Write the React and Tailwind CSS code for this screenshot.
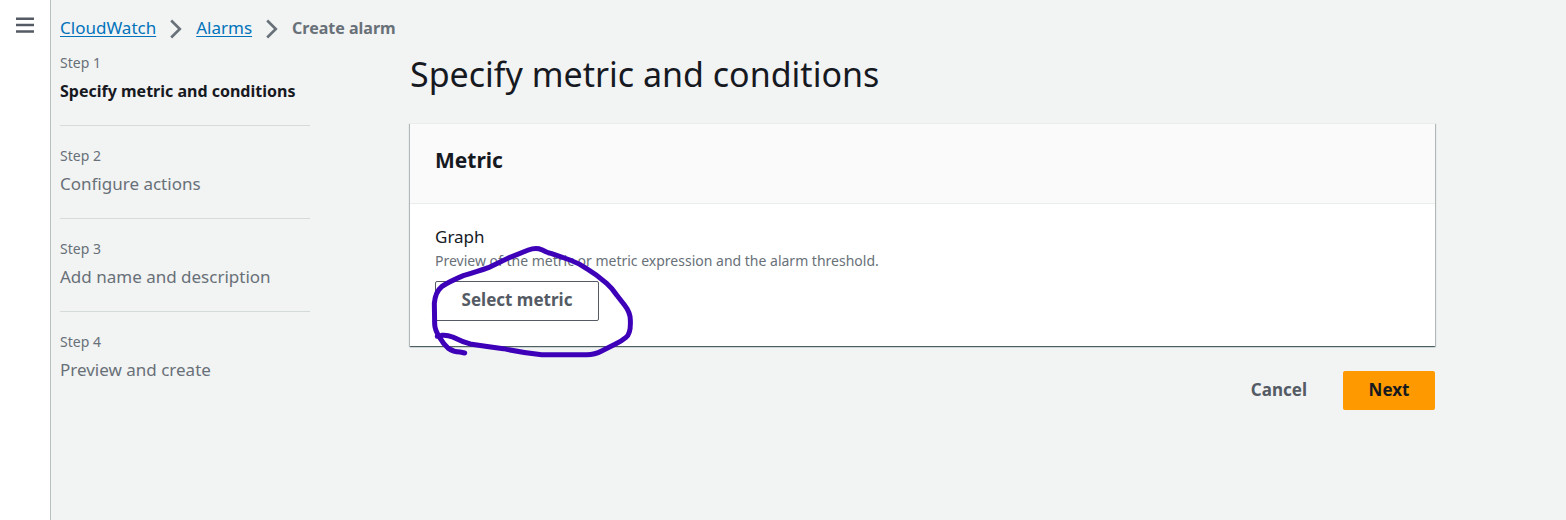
const steps = [
  'Specify metric and conditions',
  'Configure actions',
  'Add name and description',
  'Preview and create',
];

function Chevron() {
  return (
    <svg className="mx-[14px] mt-0.5 h-5 w-3 shrink-0" viewBox="0 0 12 20" fill="none" stroke="#687078" strokeWidth="2.6" aria-hidden="true">
      <path d="M1.2 1.5 L9.8 10 L1.2 18.5" />
    </svg>
  );
}

function Breadcrumbs() {
  return (
    <nav aria-label="Breadcrumbs">
      <ol className="flex items-center text-[17px] leading-6">
        <li><a href="#cloudwatch" className="text-[#0073bb] underline underline-offset-2">CloudWatch</a></li>
        <li className="flex items-center">
          <Chevron />
          <a href="#alarms" className="text-[#0073bb] underline underline-offset-2">Alarms</a>
        </li>
        <li className="flex items-center text-base leading-6 font-bold text-[#687078]" aria-current="page">
          <Chevron />
          Create alarm
        </li>
      </ol>
    </nav>
  );
}

function Steps() {
  return (
    <ol className="w-[250px] shrink-0 divide-y divide-[#d5dbdb]">
      {steps.map((title, i) => (
        <li key={title} className="flex flex-col gap-1 pt-[18px] pb-[22px] leading-6 first:pt-0">
          <span className="text-sm leading-6 text-[#687078]">Step {i + 1}</span>
          <span className={i === 0 ? 'text-base leading-6 font-bold text-[#16191f]' : 'text-[17px] leading-6 text-[#687078]'}>
            {title}
          </span>
        </li>
      ))}
    </ol>
  );
}

function Scribble() {
  return (
    <svg
      className="pointer-events-none absolute -top-[41px] -left-[10px] h-[120px] w-[215px] max-w-none"
      viewBox="75 60 645 360"
      fill="none"
      stroke="#3d00b8"
      strokeWidth="15"
      strokeLinecap="round"
      strokeLinejoin="round"
      aria-hidden="true"
    >
      <path d="M194 399 L180 396 Q160 395 145 385 Q130 372 120 354 Q104 330 104 312 L103 250 Q106 215 125 200 Q145 186 190 167 Q235 154 265 143 L330 112 L385 90 Q408 81 425 89 Q438 97 455 101 L510 120 Q535 129 560 146 Q590 164 620 190 Q635 203 650 225 L674 256 Q691 278 691 300 Q693 340 678 352 Q665 363 645 373 L605 393 Q585 404 560 404 L425 404 Q370 399 310 386 Q260 380 215 373 Q185 365 158 351 Q140 344 125 346 L112 349" />
    </svg>
  );
}

export default function App() {
  return (
    <div className="flex min-h-screen bg-[#f2f3f3] font-['Noto_Sans',sans-serif] text-[#16191f]">
      <aside className="w-[51px] shrink-0 border-r border-[#b8c0c0] bg-white">
        <button type="button" aria-label="Open navigation" className="mt-[17px] ml-4 block text-[#545b64]">
          <svg className="h-4 w-[18px]" viewBox="0 0 18 16" stroke="currentColor" strokeWidth="2.5" aria-hidden="true">
            <path d="M0 1.7h18M0 8h18M0 14.5h18" />
          </svg>
        </button>
      </aside>

      <div className="min-w-0 flex-1 pt-4 pl-[9px]">
        <Breadcrumbs />
        <div className="mt-[11px] flex gap-[100px]">
          <Steps />
          <main className="mr-8 max-w-[1025px] min-w-0 flex-1">
            <h1 className="mt-[2px] text-[34px] leading-[42px]">Specify metric and conditions</h1>

            <section className="mt-7 bg-white shadow-[0_1px_1px_0_rgba(0,28,36,0.5),1px_1px_1px_0_rgba(0,28,36,0.2),-1px_1px_1px_0_rgba(0,28,36,0.2)]">
              <header className="border-t border-b border-[#eaeded] bg-[#fafafa] px-[25px] pt-[21px] pb-7">
                <h2 className="text-[21px] leading-[30px] font-bold">Metric</h2>
              </header>
              <div className="px-[25px] pt-[21px] pb-[25px]">
                <p className="text-[17px] leading-6">Graph</p>
                <p className="text-sm leading-6 text-[#687078]">
                  Preview of the metric or metric expression and the alarm threshold.
                </p>
                <div className="relative mt-2 w-fit">
                  <button type="button" className="block h-10 w-[164px] rounded-[2px] border border-[#545b64] bg-white pb-0.5 text-[17px] leading-6 font-bold text-[#545b64]">
                    Select metric
                  </button>
                  <Scribble />
                </div>
              </div>
            </section>

            <div className="mt-[25px] flex justify-end gap-[10px] text-[17px] leading-6 font-bold">
              <button type="button" className="h-[39px] rounded-[2px] px-[26px] pb-0.5 text-[#545b64]">Cancel</button>
              <button type="button" className="h-[39px] w-[92px] rounded-[2px] bg-[#ff9900] pb-0.5 text-[#16191f]">Next</button>
            </div>
          </main>
        </div>
      </div>
    </div>
  );
}
